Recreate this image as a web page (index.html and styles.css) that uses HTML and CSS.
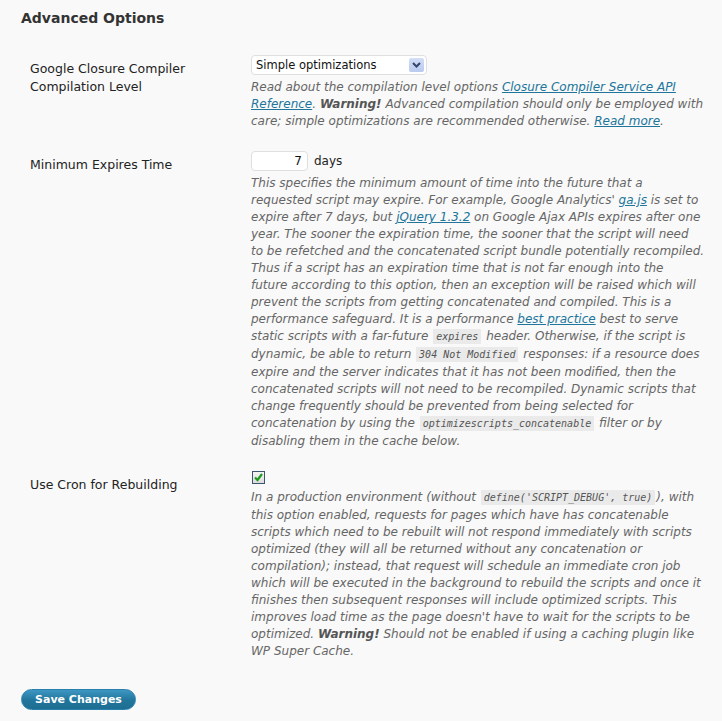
FILE: index.html
```html
<!DOCTYPE html>
<html>
<head>
<meta charset="utf-8">
<title>Advanced Options</title>
<link rel="stylesheet" href="styles.css">
</head>
<body>
<h3 class="title">Advanced Options</h3>
<div class="form-table">
  <div class="row">
    <div class="label">Google Closure Compiler<br>Compilation Level</div>
    <div class="field">
      <div class="select">
        <span class="select-text">Simple optimizations</span>
        <span class="select-arrow"><svg width="9" height="6" viewBox="0 0 9 6"><path d="M1 1 L4.5 4.5 L8 1" fill="none" stroke="#33466b" stroke-width="2"/></svg></span>
      </div>
      <p class="description">Read about the compilation level options <a href="#">Closure Compiler Service API</a><br><a href="#">Reference</a>. <strong>Warning!</strong> Advanced compilation should only be employed with<br>care; simple optimizations are recommended otherwise. <a href="#">Read more</a>.</p>
    </div>
  </div>
  <div class="row">
    <div class="label">Minimum Expires Time</div>
    <div class="field">
      <div class="inline">
        <input class="small-text" type="text" value="7"> <span class="unit">days</span>
      </div>
      <p class="description">This specifies the minimum amount of time into the future that a<br>requested script may expire. For example, Google Analytics' <a href="#">ga.js</a> is set to<br>expire after 7 days, but <a href="#">jQuery 1.3.2</a> on Google Ajax APIs expires after one<br>year. The sooner the expiration time, the sooner that the script will need<br>to be refetched and the concatenated script bundle potentially recompiled.<br>Thus if a script has an expiration time that is not far enough into the<br>future according to this option, then an exception will be raised which will<br>prevent the scripts from getting concatenated and compiled. This is a<br>performance safeguard. It is a performance <a href="#">best practice</a> best to serve<br>static scripts with a far-future <code>expires</code> header. Otherwise, if the script is<br>dynamic, be able to return <code>304 Not Modified</code> responses: if a resource does<br>expire and the server indicates that it has not been modified, then the<br>concatenated scripts will not need to be recompiled. Dynamic scripts that<br>change frequently should be prevented from being selected for<br>concatenation by using the <code>optimizescripts_concatenable</code> filter or by<br>disabling them in the cache below.</p>
    </div>
  </div>
  <div class="row">
    <div class="label">Use Cron for Rebuilding</div>
    <div class="field">
      <span class="checkbox"><svg width="11" height="11" viewBox="0 0 11 11"><path d="M2 5.5 L4.5 8 L9 2" fill="none" stroke="#1f9a1f" stroke-width="2.2"/></svg></span>
      <p class="description cb">In a production environment (without <code>define('SCRIPT_DEBUG', true)</code>), with<br>this option enabled, requests for pages which have has concatenable<br>scripts which need to be rebuilt will not respond immediately with scripts<br>optimized (they will all be returned without any concatenation or<br>compilation); instead, that request will schedule an immediate cron job<br>which will be executed in the background to rebuild the scripts and once it<br>finishes then subsequent responses will include optimized scripts. This<br>improves load time as the page doesn't have to wait for the scripts to be<br>optimized. <strong>Warning!</strong> Should not be enabled if using a caching plugin like<br>WP Super Cache.</p>
    </div>
  </div>
</div>
<p class="submit"><button class="button-primary" type="button">Save Changes</button></p>
</body>
</html>
```
FILE: styles.css
```css
html, body {
  background: #f9f9f9;
}
body {
  margin: 0;
  padding: 0 20px;
  font-family: "DejaVu Sans", Verdana, sans-serif;
  color: #333;
}
.title {
  margin: 8px 0 17px 1px;
  font-size: 14px;
  line-height: 20px;
  font-weight: bold;
  color: #333;
}
.form-table {
  display: flex;
  flex-direction: column;
}
.row {
  display: grid;
  grid-template-columns: 231px 471px;
  padding: 10px 0 11px;
}
.label {
  padding: 5px 0 0 10px;
  font-size: 12.5px;
  line-height: 18px;
  color: #222;
}
.field {
  min-width: 0;
}
.select {
  display: flex;
  align-items: center;
  justify-content: space-between;
  box-sizing: border-box;
  width: 176px;
  height: 20px;
  padding: 0 2px 0 4px;
  background: #fff;
  border: 1px solid #dfdfdf;
  border-radius: 4px;
  font-size: 11.5px;
  color: #111;
}
.select-arrow {
  display: flex;
  align-items: center;
  justify-content: center;
  width: 15px;
  height: 14px;
  background: linear-gradient(#d3def7, #b9caf0);
  border-radius: 2px;
}
.description {
  margin: 4px 0 0;
  font-size: 12px;
  line-height: 17px;
  font-style: italic;
  color: #666;
  white-space: nowrap;
}
.description.cb {
  margin-top: 5px;
}
.description a {
  color: #21759b;
}
.description strong {
  color: #555;
}
code {
  padding: 2px 3px;
  margin: 0 1px;
  background: #eaeaea;
  font-family: "DejaVu Sans Mono", monospace;
  font-size: 10px;
  line-height: 18px;
  color: #555;
}
.inline {
  display: flex;
  align-items: center;
  gap: 6px;
}
.small-text {
  box-sizing: border-box;
  width: 57px;
  height: 20px;
  margin: 0;
  padding: 0 5px;
  text-align: right;
  background: #fff;
  border: 1px solid #dfdfdf;
  border-radius: 4px;
  font-family: "DejaVu Sans", sans-serif;
  font-size: 12px;
  color: #111;
}
.unit {
  font-size: 12px;
  color: #222;
}
.checkbox {
  display: flex;
  align-items: center;
  justify-content: center;
  box-sizing: border-box;
  width: 13px;
  height: 13px;
  margin-left: 1px;
  border: 1px solid #3b5670;
  background: linear-gradient(#f4f4f4, #dcdcdc);
}
.submit {
  margin: 17px 0 0 1px;
}
.button-primary {
  box-sizing: border-box;
  width: 115px;
  height: 21px;
  padding: 0;
  border: 1px solid #2a80ad;
  border-radius: 11px;
  background: linear-gradient(#3d97c3, #21759b 55%, #1f6e93);
  color: #fff;
  font-family: "DejaVu Sans", sans-serif;
  font-weight: bold;
  font-size: 11px;
  line-height: 19px;
}
```
